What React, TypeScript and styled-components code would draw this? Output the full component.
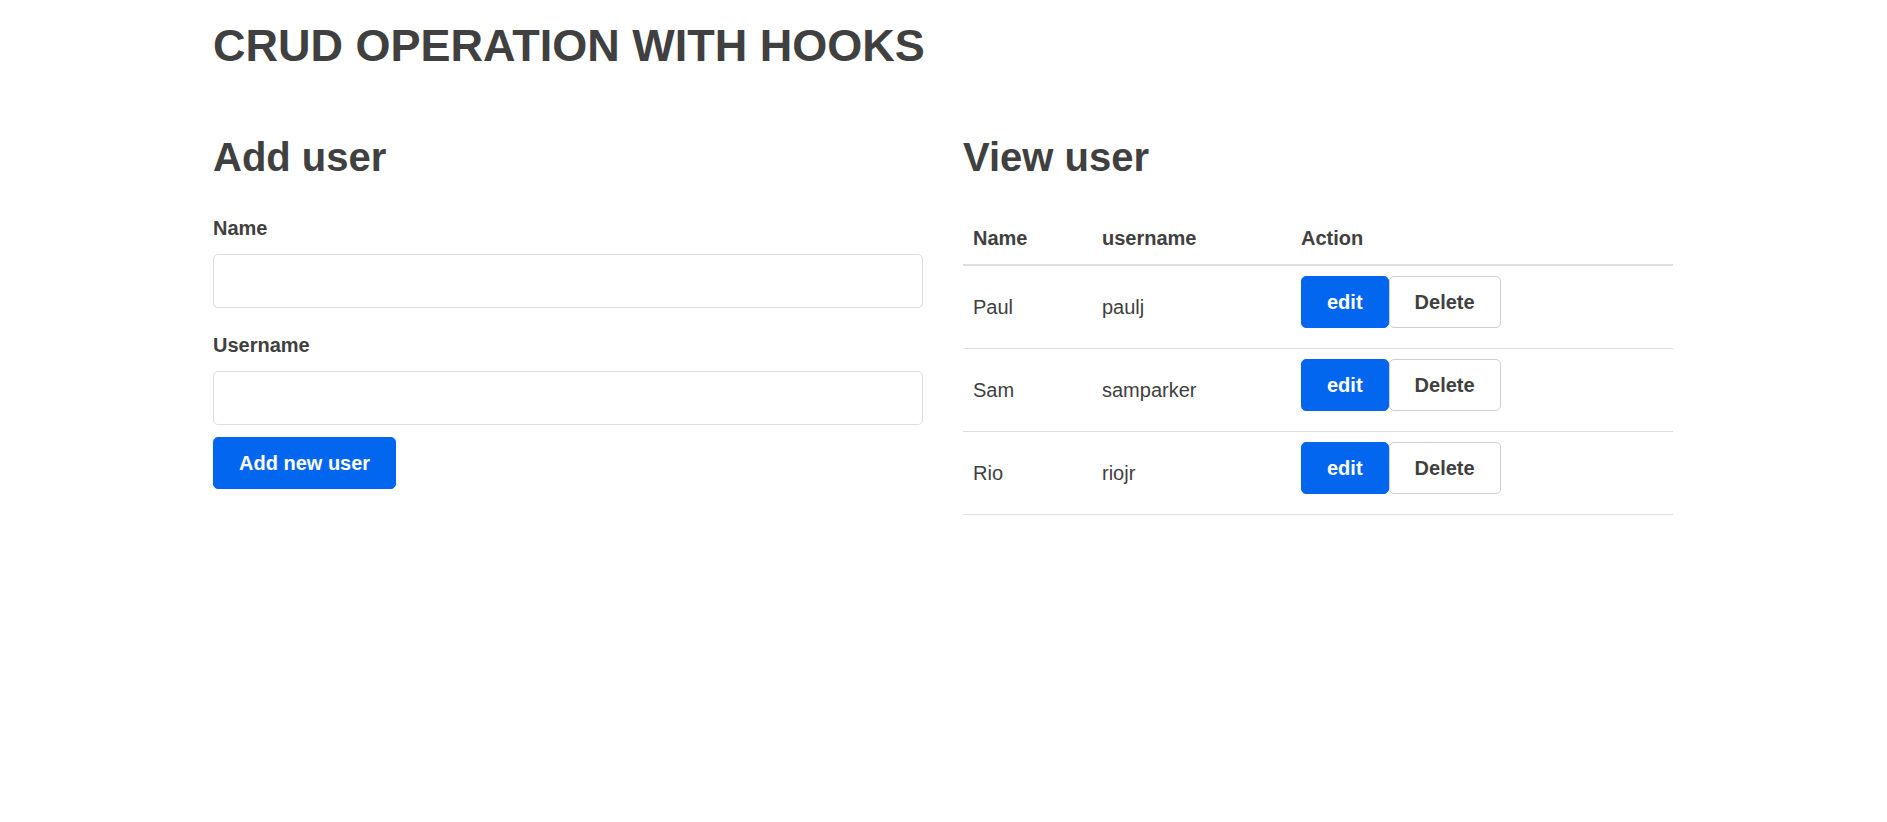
import * as React from 'react';
import styled, { createGlobalStyle } from 'styled-components';

const GlobalStyle = createGlobalStyle`
  html, body {
    margin: 0;
    padding: 0;
    background: #fff;
  }
  body {
    font-family: "Liberation Sans", Arial, Helvetica, sans-serif;
    font-size: 20px;
    line-height: 30px;
    color: #404040;
  }
  * {
    box-sizing: border-box;
  }
`;

const Container = styled.div`
  width: 1461px;
  margin: 0 auto;
  padding: 19px 1px 0 0;
`;

const Title = styled.h1`
  margin: 0 0 60px;
  font-size: 45px;
  line-height: 54px;
  font-weight: 700;
`;

const Row = styled.div`
  display: grid;
  grid-template-columns: 1fr 1fr;
  gap: 40px;
`;

const Column = styled.section`
  min-width: 0;
`;

const Heading = styled.h2`
  margin: 0 0 32px;
  font-size: 40px;
  line-height: 48px;
  font-weight: 700;
`;

const Form = styled.form`
  display: flex;
  flex-direction: column;
  align-items: flex-start;
`;

const Label = styled.label`
  display: block;
  font-weight: 700;
  line-height: 30px;
  margin-bottom: 11px;
`;

const Input = styled.input`
  display: block;
  width: 100%;
  height: 54px;
  margin: 0 0 22px;
  padding: 0 12px;
  border: 1px solid #dedede;
  border-radius: 5px;
  font: inherit;
  color: inherit;
  background: #fff;
  outline: none;

  &:last-of-type {
    margin-bottom: 12px;
  }
`;

const Button = styled.button<{ $variant?: 'primary' | 'muted' }>`
  height: 52px;
  padding: 0 25px;
  margin: 0;
  border-radius: 5px;
  border: 1px solid ${(p) => (p.$variant === 'muted' ? '#cfcfcf' : '#0366ee')};
  background: ${(p) => (p.$variant === 'muted' ? '#fff' : '#0366ee')};
  color: ${(p) => (p.$variant === 'muted' ? '#404040' : '#fff')};
  font-family: inherit;
  font-size: 20px;
  font-weight: 700;
  line-height: 1;
  cursor: pointer;
  vertical-align: top;
`;

const Table = styled.table`
  width: 100%;
  border-collapse: collapse;
  border-spacing: 0;
`;

const Th = styled.th<{ $w?: number }>`
  text-align: left;
  font-weight: 700;
  padding: 10px 10px 11px;
  line-height: 30px;
  border-bottom: 2px solid #dedede;
  width: ${(p) => (p.$w ? `${p.$w}px` : 'auto')};
`;

const Td = styled.td`
  padding: 10px;
  line-height: 30px;
  vertical-align: middle;
  border-bottom: 1px solid #dedede;
`;

const Actions = styled.div`
  display: flex;
  margin-bottom: 10px;
`;

const users = [
  { id: 1, name: 'Paul', username: 'paulj' },
  { id: 2, name: 'Sam', username: 'samparker' },
  { id: 3, name: 'Rio', username: 'riojr' },
];

function App() {
  return (
    <>
      <GlobalStyle />
      <Container>
        <Title>CRUD OPERATION WITH HOOKS</Title>
        <Row>
          <Column>
            <Heading>Add user</Heading>
            <Form onSubmit={(e) => e.preventDefault()}>
              <Label htmlFor="name">Name</Label>
              <Input id="name" type="text" name="name" />
              <Label htmlFor="username">Username</Label>
              <Input id="username" type="text" name="username" />
              <Button type="submit">Add new user</Button>
            </Form>
          </Column>
          <Column>
            <Heading>View user</Heading>
            <Table>
              <thead>
                <tr>
                  <Th $w={129}>Name</Th>
                  <Th $w={199}>username</Th>
                  <Th>Action</Th>
                </tr>
              </thead>
              <tbody>
                {users.map((u) => (
                  <tr key={u.id}>
                    <Td>{u.name}</Td>
                    <Td>{u.username}</Td>
                    <Td>
                      <Actions>
                        <Button>edit</Button>
                        <Button $variant="muted">Delete</Button>
                      </Actions>
                    </Td>
                  </tr>
                ))}
              </tbody>
            </Table>
          </Column>
        </Row>
      </Container>
    </>
  );
}

export default App;
